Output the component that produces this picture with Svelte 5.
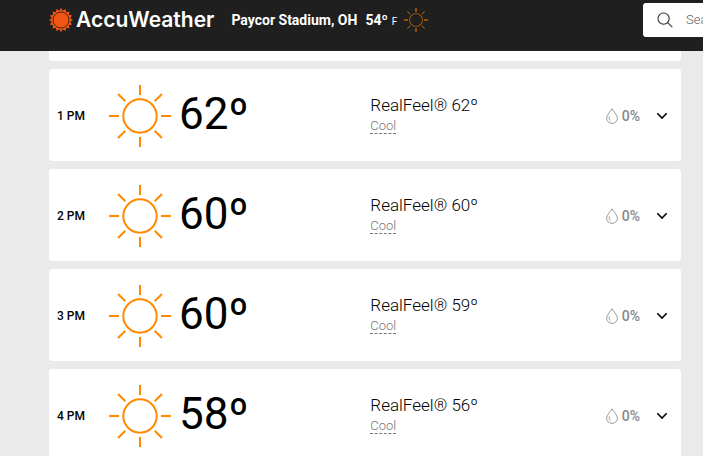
<script>
  const hours = [
    { time: '1 PM', temp: 62, feel: 62 },
    { time: '2 PM', temp: 60, feel: 60 },
    { time: '3 PM', temp: 60, feel: 59 },
    { time: '4 PM', temp: 58, feel: 56 },
  ];
  const points = Array.from({ length: 32 }, (_, i) => {
    const r = i % 2 ? 9.4 : 12;
    const a = (i * Math.PI) / 16;
    return `${(12 + r * Math.sin(a)).toFixed(2)},${(12 - r * Math.cos(a)).toFixed(2)}`;
  }).join(' ');
</script>

<div class="page">
  <header>
    <a class="brand" href="#home">
      <svg width="24" height="24" viewBox="0 0 24 24" aria-hidden="true">
        <polygon {points} fill="#f05514" />
        <circle cx="12" cy="12" r="8" fill="#f05514" stroke="#4a2618" stroke-width="1" />
      </svg>
      <span>AccuWeather</span>
    </a>
    <a class="place" href="#location">
      <span>Paycor Stadium, OH</span>
      <span class="now">54º</span>
      <span class="unit">F</span>
      <svg width="24" height="24" viewBox="0 0 24 24" fill="none" stroke="#8f4f0b" aria-hidden="true">
        <circle cx="12" cy="12" r="6.5" stroke-width="1.2" />
        <path d="M12 0v4M12 20v4M0 12h4M20 12h4" stroke-width="2" />
        <path d="M3.3 3.3l3 3M17.7 17.7l3 3M20.7 3.3l-3 3M6.3 17.7l-3 3" stroke="#c2690a" />
      </svg>
    </a>
    <label class="search">
      <svg width="16" height="16" viewBox="0 0 16 16" fill="none" stroke="#333" stroke-width="1.1" aria-hidden="true">
        <circle cx="6.6" cy="6.6" r="5.6" />
        <path d="M10.7 10.7l4.6 4.4" />
      </svg>
      <input type="text" placeholder="Search" aria-label="Search" />
    </label>
  </header>

  <main>
    <div class="card previous"></div>
    {#each hours as hour}
      <section class="card">
        <h2>{hour.time}</h2>
        <svg class="sun" width="64" height="64" viewBox="0 0 64 64" fill="none" stroke="#ff8a00" stroke-width="2" aria-hidden="true">
          <circle cx="32" cy="32" r="16.7" />
          <path d="M32 1v10M32 53v10M1 32h10M53 32h10M10 10l7.3 7.3M46.7 46.7l7.3 7.3M54 10l-7.3 7.3M17.3 46.7l-7.3 7.3" />
        </svg>
        <div class="temp">{hour.temp}º</div>
        <div class="feel">
          <div class="real">RealFeel® {hour.feel}º</div>
          <a href="#cool">Cool</a>
        </div>
        <div class="precip">
          <svg width="12" height="16" viewBox="0 0 12 16" fill="none" stroke="#999" aria-hidden="true">
            <path d="M6 .8C4.6 3.3.6 6.9.6 10.2a5.4 5.2 0 0 0 10.8 0C11.4 6.9 7.4 3.3 6 .8z" />
            <path d="M3.4 8.3c-.6 1.7-.3 3.4 1.3 4.2" />
          </svg>
          <span>0%</span>
        </div>
        <button aria-label="Show details for {hour.time}">
          <svg width="12" height="8" viewBox="0 0 12 8" fill="none" stroke="#000" stroke-width="1.6" aria-hidden="true">
            <path d="M1.3 1.3L6 6l4.7-4.7" />
          </svg>
        </button>
      </section>
    {/each}
  </main>
</div>

<style>
  :global(body) {
    margin: 0;
    background: #eaeaea;
  }
  .page {
    height: 100vh;
    overflow: hidden;
    font-family: Roboto, 'Liberation Sans', sans-serif;
    color: #000;
  }
  header {
    display: flex;
    align-items: center;
    box-sizing: border-box;
    padding: 3px 0 14px 49px;
    background: #1f1f1f;
    overflow: hidden;
  }
  a {
    text-decoration: none;
  }
  .brand,
  .place {
    display: flex;
    align-items: center;
    flex: none;
    color: #fff;
    white-space: nowrap;
  }
  .brand {
    gap: 3px;
    font: 600 21px/28px Inter, sans-serif;
  }
  .place {
    margin-left: 17px;
    font-size: 14px;
    font-weight: 700;
  }
  .now {
    margin-left: 8px;
  }
  .unit {
    margin: 3px 7px 0 4px;
    font-size: 10px;
    font-weight: 400;
  }
  .search {
    display: flex;
    align-items: center;
    flex: none;
    gap: 13px;
    box-sizing: border-box;
    width: 250px;
    height: 34px;
    margin-left: auto;
    margin-right: -190px;
    padding-left: 14px;
    border-radius: 3px;
    background: #fff;
  }
  input {
    flex: 1;
    min-width: 0;
    padding: 0;
    border: 0;
    outline: 0;
    background: none;
    font: 300 13px/20px Roboto, sans-serif;
  }
  input::placeholder {
    color: #666;
    opacity: 1;
  }
  main {
    display: flex;
    flex-direction: column;
    gap: 8px;
    padding: 0 22px 0 49px;
  }
  .card {
    display: flex;
    align-items: center;
    padding: 15px 12px 13px 8px;
    border-radius: 3px;
    background: #fff;
  }
  .previous {
    padding: 5px 0;
    border-radius: 0 0 3px 3px;
  }
  h2 {
    width: 51px;
    margin: 0;
    font-size: 12px;
    font-weight: 500;
    line-height: 20px;
  }
  .sun {
    flex: none;
  }
  .temp {
    flex: 4;
    margin-left: 7px;
    padding-bottom: 4px;
    font-size: 44px;
    line-height: 52px;
  }
  .feel {
    flex: 5;
    margin-left: 3px;
    padding-bottom: 4px;
    font-size: 17px;
    font-weight: 300;
    line-height: 24px;
  }
  .feel a {
    display: block;
    width: max-content;
    color: #777;
    font-size: 13px;
    line-height: 18px;
    text-decoration: underline dashed 1px;
    text-underline-offset: 3px;
  }
  .precip {
    display: flex;
    align-items: center;
    gap: 4px;
    color: #878787;
    font-size: 14px;
    font-weight: 500;
  }
  button {
    display: flex;
    margin: 0 0 0 15px;
    padding: 6px 1px;
    border: 0;
    background: none;
  }
</style>
